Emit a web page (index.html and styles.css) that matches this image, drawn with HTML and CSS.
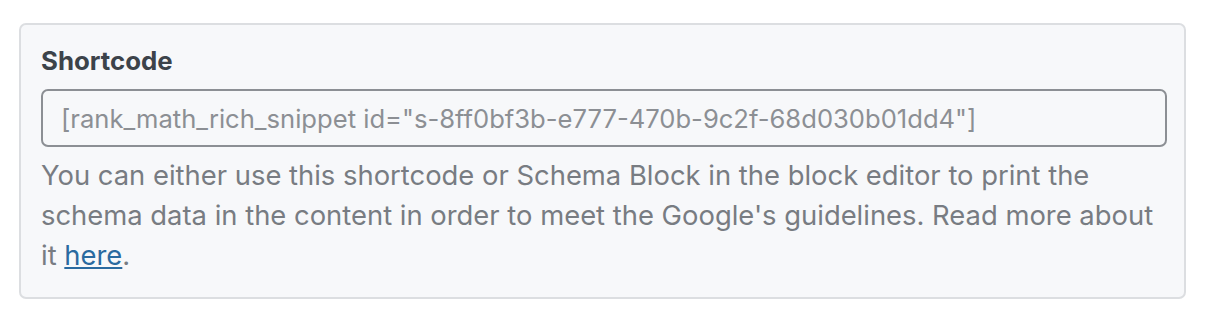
FILE: index.html
```html
<!DOCTYPE html>
<html lang="en">
  <head>
    <meta charset="UTF-8" />
    <title>Shortcode</title>
    <link rel="stylesheet" href="styles.css">
  </head>
  <body>
    <div class="wrap">
      <div class="field-box">
        <label class="field-label" for="shortcode">Shortcode</label>
        <input
          id="shortcode"
          class="field-input"
          type="text"
          readonly
          placeholder='[rank_math_rich_snippet id="s-8ff0bf3b-e777-470b-9c2f-68d030b01dd4"]'
        />
        <p class="field-desc">
          You can either use this shortcode or Schema Block in the block editor to print the<br>
          schema data in the content in order to meet the Google's guidelines. Read more about<br>
          it <a href="#">here</a>.
        </p>
      </div>
    </div>
  </body>
</html>
```

FILE: styles.css
```css
body {
  margin: 0;
  background-color: #ffffff;
  font-family: "Inter", "Noto Sans", sans-serif;
}

.wrap {
  padding: 23px 20px 19px 19px;
}

.field-box {
  background-color: #f7f8fa;
  border: 2px solid #dcdee1;
  border-radius: 7px;
  padding: 20px 17px 22px 20px;
}

.field-label {
  display: block;
  font-size: 25.8px;
  font-weight: 700;
  line-height: 32px;
  color: #3c434a;
  margin-bottom: 12px;
}

.field-input {
  display: block;
  box-sizing: border-box;
  width: 100%;
  height: 58px;
  margin: 0;
  padding: 0 18px;
  border: 2px solid #8c8f94;
  border-radius: 7px;
  background-color: #f7f8fa;
  font-family: inherit;
  font-size: 25.6px;
  color: #8c8f94;
  outline: none;
}

.field-input::placeholder {
  color: #8c8f94;
}

.field-desc {
  margin: 8px 0 0;
  font-size: 27.4px;
  line-height: 40px;
  color: #787c82;
}

.field-desc a {
  color: #2a6aa0;
}
```
